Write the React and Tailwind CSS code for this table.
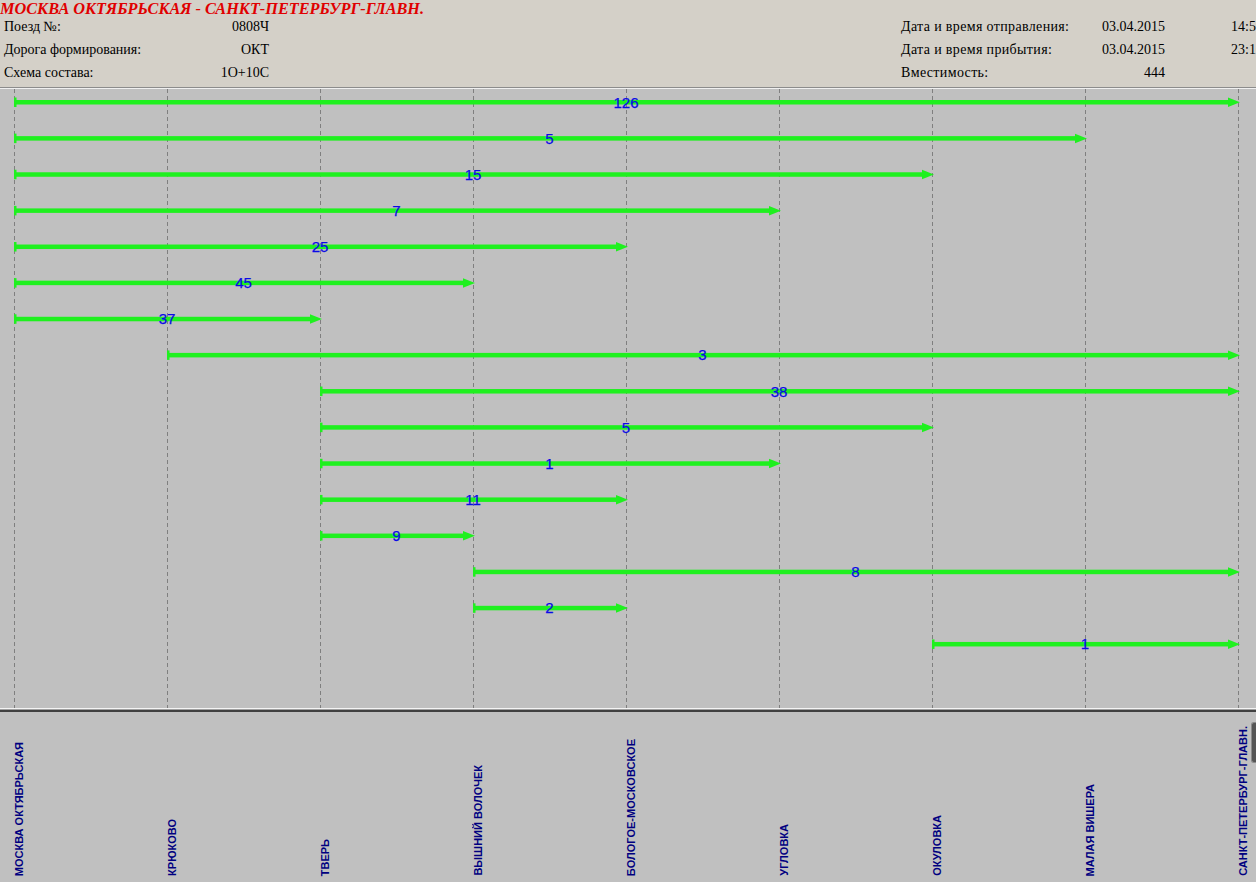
import React from 'react';

// станции по оси X (шаг 153px)
const stations = [
  'МОСКВА ОКТЯБРЬСКАЯ',
  'КРЮКОВО',
  'ТВЕРЬ',
  'ВЫШНИЙ ВОЛОЧЕК',
  'БОЛОГОЕ-МОСКОВСКОЕ',
  'УГЛОВКА',
  'ОКУЛОВКА',
  'МАЛАЯ ВИШЕРА',
  'САНКТ-ПЕТЕРБУРГ-ГЛАВН.',
];

// [от, до, мест]
const segments = [
  [0, 8, 126],
  [0, 7, 5],
  [0, 6, 15],
  [0, 5, 7],
  [0, 4, 25],
  [0, 3, 45],
  [0, 2, 37],
  [1, 8, 3],
  [2, 8, 38],
  [2, 6, 5],
  [2, 5, 1],
  [2, 4, 11],
  [2, 3, 9],
  [3, 8, 8],
  [3, 4, 2],
  [6, 8, 1],
];

const stationX = (i) => 14 + i * 153;
const rowY = (i) => 13 + i * 36.13;

const CHART_H = 619;

const InfoRow = ({ label, value }) => (
  <div className="flex justify-between h-[23px] leading-[23px] whitespace-nowrap">
    <span>{label}</span>
    <span>{value}</span>
  </div>
);

const Header = () => (
  <div className="h-[87px] bg-[#d4d0c8] flex text-[14px] text-black font-['Liberation_Serif',serif] overflow-hidden">
    <div className="w-[901px] shrink-0">
      <div className="h-[15px] leading-[18px] text-[16.3px] font-bold italic text-[#e00000] whitespace-nowrap">
        МОСКВА ОКТЯБРЬСКАЯ - САНКТ-ПЕТЕРБУРГ-ГЛАВН.
      </div>
      <div className="w-[269px] pl-[4px]">
        <InfoRow label="Поезд №:" value="0808Ч" />
        <InfoRow label="Дорога формирования:" value="ОКТ" />
        <InfoRow label="Схема состава:" value="1О+10С" />
      </div>
    </div>
    <div className="pt-[15px] whitespace-nowrap">
      {[
        ['Дата и время отправления:', '03.04.2015', '14:55'],
        ['Дата и время прибытия:', '03.04.2015', '23:10'],
        ['Вместимость:', '444', ''],
      ].map(([l, d, t]) => (
        <div key={l} className="flex h-[23px] leading-[23px]">
          <span className="w-[200px] shrink-0 tracking-[0.35px]">{l}</span>
          <span className="w-[64px] shrink-0 text-right">{d}</span>
          <span className="ml-[66px] shrink-0">{t}</span>
        </div>
      ))}
    </div>
  </div>
);

const Chart = () => (
  <svg width="1256" height={CHART_H} className="block shrink-0">
    {stations.map((s, i) => (
      <line
        key={s}
        x1={stationX(i) + 0.5}
        x2={stationX(i) + 0.5}
        y1="0"
        y2={CHART_H}
        stroke="#7f7f7f"
        strokeWidth="1"
        strokeDasharray="4 3"
      />
    ))}
    {segments.map(([a, b, n], i) => {
      const x0 = stationX(a);
      const x1 = stationX(b);
      const y = rowY(i);
      return (
        <g key={i}>
          <rect x={x0} y={y - 2} width={x1 - x0 - 8} height="4.5" fill="#1ff01f" />
          <rect x={x0} y={y - 4.5} width="2.5" height="9.5" fill="#1ff01f" />
          <polygon points={`${x1 - 10},${y - 4.5} ${x1 + 2},${y + 0.25} ${x1 - 10},${y + 5}`} fill="#1ff01f" />
          <text
            x={(x0 + x1) / 2}
            y={y + 5.5}
            textAnchor="middle"
            fontSize="15"
            fontFamily="'Liberation Sans', Arial, sans-serif"
            fill="#0a0ae6"
            stroke="#0a0ae6"
            strokeWidth="0.25"
          >
            {n}
          </text>
        </g>
      );
    })}
  </svg>
);

const StationLabels = () => (
  <div className="relative flex-1 flex items-end pl-[14px] pb-[6px] overflow-hidden">
    {stations.map((s) => (
      <div key={s} className="w-[153px] shrink-0 flex items-end">
        <span className="[writing-mode:vertical-rl] rotate-180 whitespace-nowrap text-[11px] leading-[11px] font-bold text-[#000080] font-['Liberation_Sans',Arial,sans-serif]">
          {s}
        </span>
      </div>
    ))}
    <div className="absolute right-0 top-[10px] w-[5px] h-[41px] bg-[#555555] border border-r-0 border-[#8a8a8a] rounded-l-[3px]" />
  </div>
);

export default function App() {
  return (
    <div className="w-[1256px] h-[882px] overflow-hidden bg-[#c0c0c0] flex flex-col">
      <Header />
      <div className="h-px bg-[#8c8c8c] shrink-0" />
      <div className="h-px bg-[#f0f0f0] shrink-0" />
      <Chart />
      <div className="h-px bg-[#f4f4f4] shrink-0" />
      <div className="h-px bg-[#a0a0a0] shrink-0" />
      <div className="h-[2px] bg-[#404040] shrink-0" />
      <StationLabels />
    </div>
  );
}
